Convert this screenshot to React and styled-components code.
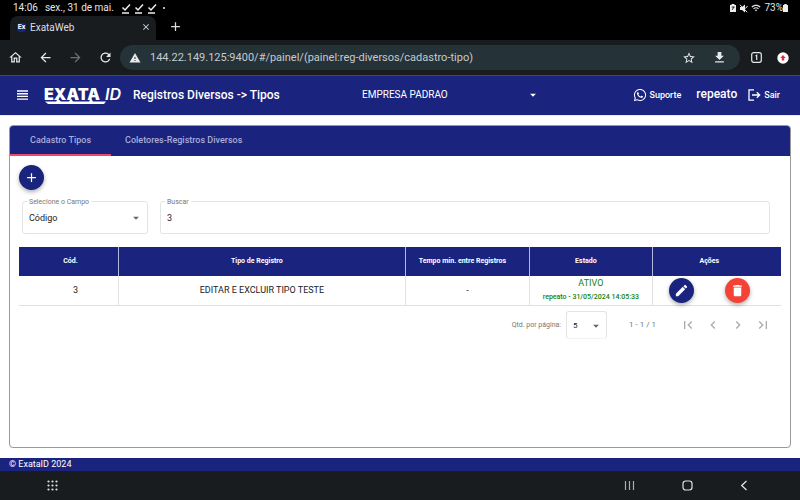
import React from "react";
import styled, { createGlobalStyle } from "styled-components";
import {
  MdAdd, MdArrowBack, MdArrowDropDown, MdArrowForward, MdChevronLeft, MdChevronRight,
  MdClose, MdDelete, MdDownload, MdEdit, MdFirstPage, MdLastPage, MdRefresh,
  MdStarBorder, MdWarning, MdWifi, MdOutlineHome,
} from "react-icons/md";
import { FaWhatsapp } from "react-icons/fa";

const navy = "#1a237e";
const dark = "#191c1e";

const Global = createGlobalStyle`
  * { box-sizing: border-box; }
  body { margin: 0; background: #fff; font-family: Roboto, sans-serif; color: #222; }
  button, input, select { font-family: inherit; color: inherit; }
  svg { display: block; flex: none; }
`;

const Page = styled.div`
  min-height: 100vh;
  display: flex;
  flex-direction: column;
`;

const Spacer = styled.div`
  flex: 1;
`;

const StatusBar = styled.div`
  height: 16px;
  padding: 0 12px 0 13px;
  display: flex;
  align-items: center;
  background: #000;
  color: #e4e4e4;
  font-size: 10px;
  line-height: 16px;
`;

const StatusText = styled.span`
  margin-right: 7px;
`;

const StatusIcons = styled.div`
  display: flex;
  align-items: center;
  gap: ${(p) => p.$gap || 3}px;
`;

const Dot = styled.span`
  width: 2px;
  height: 2px;
  margin-left: 3px;
  border-radius: 50%;
  background: #eee;
`;

const TabStrip = styled.div`
  height: 24px;
  padding-left: 10px;
  display: flex;
  align-items: stretch;
  gap: 12px;
  background: #000;
  color: #dcdfe1;
`;

const BrowserTab = styled.div`
  width: 146px;
  padding: 0 5px 2px 7px;
  display: flex;
  align-items: center;
  gap: 4px;
  border-radius: 8px 8px 0 0;
  background: ${dark};
  font-size: 10px;
`;

const Favicon = styled.span`
  width: 9px;
  height: 9px;
  border-radius: 3px;
  background: ${navy};
  color: #fff;
  font-size: 7px;
  font-weight: 700;
  line-height: 9px;
  text-align: center;
`;

const PlainButton = styled.button`
  padding: 0;
  border: 0;
  display: flex;
  align-items: center;
  justify-content: center;
  background: none;
  color: ${(p) => p.$color || "inherit"};
  cursor: pointer;
`;

const NewTabButton = styled(PlainButton)`
  padding-bottom: 3px;
`;

const Toolbar = styled.div`
  height: 36px;
  padding: 0 11px 0 8px;
  display: flex;
  align-items: center;
  gap: 15px;
  background: ${dark};
  border-bottom: 1px solid #484c50;
  color: #e6e8e9;
`;

const AddressBar = styled.div`
  flex: 1;
  height: 25px;
  margin: 0 -4px 0 -8px;
  padding: 0 13px 0 9px;
  display: flex;
  align-items: center;
  gap: 16px;
  border-radius: 13px;
  background: #253237;
`;

const Url = styled.input`
  flex: 1;
  min-width: 0;
  margin-left: -7px;
  padding: 0;
  border: 0;
  outline: 0;
  background: none;
  color: #c5cbce;
  font-size: 11px;
`;

const AppHeader = styled.header`
  height: 39px;
  padding: 0 20px 2px 16px;
  display: flex;
  align-items: center;
  background: ${navy};
  color: #fff;
`;

const Logo = styled.svg`
  margin: 0 8px 0 15px;
`;

const LogoText = styled.text`
  fill: #fff;
  font-family: Inter, sans-serif;
  font-size: ${(p) => p.$size}px;
  font-weight: ${(p) => p.$weight};
  font-style: ${(p) => (p.$italic ? "italic" : "normal")};
`;

const Title = styled.h1`
  flex: 0 0 229px;
  margin: 0;
  font-size: 12px;
  font-weight: 500;
`;

const SelectBox = styled.div`
  flex: ${(p) => p.$flex || "none"};
  display: grid;
  align-items: center;
  > * { grid-area: 1 / 1; }
  > svg { justify-self: end; pointer-events: none; color: ${(p) => p.$arrow || "#666"}; }
`;

const Select = styled.select`
  width: 100%;
  height: ${(p) => p.$height}px;
  padding: 0 18px 0 0;
  border: 0;
  outline: 0;
  appearance: none;
  background: none;
  font-size: ${(p) => p.$size}px;
`;

const HeaderLink = styled.a`
  display: flex;
  align-items: center;
  gap: 3px;
  color: #fff;
  font-size: 9px;
  font-weight: 500;
  text-decoration: none;
`;

const UserName = styled.span`
  margin: 0 11px 2px 15px;
  font-size: 12px;
  font-weight: 500;
`;

const Main = styled.main`
  flex: 1;
  padding: 9px 9px 10px;
  display: flex;
  border-top: 1px solid #e4edfb;
`;

const Panel = styled.section`
  flex: 1;
  min-width: 0;
  border: 1px solid #999;
  border-radius: 4px;
  overflow: hidden;
`;

const Tabs = styled.div`
  display: flex;
  height: 30px;
  background: ${navy};
`;

const Tab = styled.button`
  padding: 0 ${(p) => (p.$active ? 20 : 14)}px;
  border: 0;
  border-bottom: 2px solid ${(p) => (p.$active ? "#e84a70" : "transparent")};
  background: none;
  color: #a9addb;
  font-size: 9px;
  font-weight: 500;
  cursor: pointer;
`;

const Body = styled.div`
  padding: 9px 9px 8px;
`;

const RoundButton = styled.button`
  width: 25px;
  height: 25px;
  padding: 0;
  border: 0;
  border-radius: 50%;
  display: flex;
  align-items: center;
  justify-content: center;
  background: ${(p) => p.$color || navy};
  color: #fff;
  box-shadow: 0 2px 4px rgba(0, 0, 0, 0.32);
  cursor: pointer;
`;

const Filters = styled.div`
  margin: 11px 11px 13px 3px;
  display: flex;
  gap: 12px;
`;

const Field = styled.div`
  position: relative;
  flex: ${(p) => p.$flex};
  min-width: 0;
  height: 33px;
  padding: 0 4px 0 6px;
  border: 1px solid #e4e4e4;
  border-radius: 3px;
`;

const FieldLabel = styled.label`
  position: absolute;
  top: -4px;
  left: 4px;
  padding: 0 2px;
  background: #fff;
  color: #777;
  font-size: 7px;
  line-height: 8px;
`;

const TextInput = styled.input`
  width: 100%;
  height: 32px;
  padding: 0;
  border: 0;
  outline: 0;
  background: none;
  font-size: 9px;
`;

const Table = styled.table`
  width: 100%;
  table-layout: fixed;
  border-collapse: collapse;
`;

const HeadCell = styled.th`
  width: ${(p) => p.$width};
  height: 29px;
  padding: 0 ${(p) => p.$shift || 0}px 2px ${(p) => p.$indent || 0}px;
  border-right: ${(p) => (p.$last ? "0" : "1px solid #b4b8dc")};
  background: ${navy};
  color: #fff;
  font-size: 7px;
  font-weight: 700;
`;

const Cell = styled.td`
  height: 29px;
  padding: 0 0 0 ${(p) => (p.$indent || 0)}px;
  border-right: ${(p) => (p.$last ? "0" : "1px solid #e2e2e2")};
  border-bottom: 1px solid #e0e0e0;
  font-size: 9px;
  text-align: center;
`;

const State = styled.div`
  color: #128212;
  line-height: 14px;
`;

const StateDetail = styled(State)`
  font-size: 7px;
  font-weight: 500;
`;

const Actions = styled.div`
  display: flex;
  justify-content: center;
  gap: 31px;
  padding-right: 15px;
`;

const Pager = styled.div`
  margin-top: 5px;
  display: flex;
  justify-content: flex-end;
  align-items: center;
  padding-right: 10px;
  color: #777;
  font-size: 7px;
`;

const PageSize = styled.div`
  width: 41px;
  height: 28px;
  margin: 0 22px 0 5px;
  padding: 0 3px 0 6px;
  border: 1px solid #e4e4e4;
  border-bottom-color: #f3f3f3;
  border-radius: 3px;
  color: #222;
`;

const Range = styled.span`
  margin-right: 24px;
  font-size: 8px;
`;

const PageButtons = styled.div`
  display: flex;
  gap: 9px;
`;

const Footer = styled.footer`
  height: 13px;
  padding-left: 9px;
  background: ${navy};
  color: #fff;
  font-size: 9px;
  line-height: 12px;
`;

const SystemBar = styled.nav`
  height: 29px;
  padding: 0 52px 1px 47px;
  display: flex;
  align-items: center;
  gap: 47px;
  background: ${dark};
  color: #dfe2e3;
`;

const CheckMark = () => (
  <svg width="10" height="11" viewBox="0 0 10 11" fill="none" stroke="#eee" strokeWidth="1.5">
    <path d="M1.5 4.5 4 7 9 1.5M1 10h7" />
  </svg>
);

const MenuIcon = () => (
  <svg width="13" height="12" viewBox="0 0 13 12" stroke="#fff" strokeWidth="1.4">
    <path d="M1 2h11M1 4.7h11M1 7.4h11M1 10.1h11" />
  </svg>
);

const ExitIcon = () => (
  <svg width="13" height="12" viewBox="0 0 13 12" fill="none" stroke="#fff" strokeWidth="1.3">
    <path d="M6 .8H1v10.4h5M4 6h7.5M8.8 3.2 11.7 6 8.8 8.8" />
  </svg>
);

const CountIcon = () => (
  <svg width="11" height="11" viewBox="0 0 11 11" fill="none" stroke="#e6e8e9" strokeWidth="1.2">
    <rect x=".7" y=".7" width="9.6" height="9.6" rx="2" />
    <path d="M4.5 4 5.7 3.3V8" />
  </svg>
);

const UpdateIcon = () => (
  <svg width="12" height="12" viewBox="0 0 12 12">
    <circle cx="6" cy="6" r="5.7" fill="#fff" />
    <path d="M6 3 8.7 6H7.2v2.6H4.8V6H3.3z" fill="#d9303a" />
  </svg>
);

const AppsIcon = () => (
  <svg width="11" height="11" viewBox="0 0 11 11" fill="currentColor">
    {[1.5, 5.5, 9.5].flatMap((y) => [1.5, 5.5, 9.5].map((x) => <circle key={`${x}-${y}`} cx={x} cy={y} r="1.1" />))}
  </svg>
);

const RecentsIcon = () => (
  <svg width="11" height="11" viewBox="0 0 11 11" stroke="#a9adae" strokeWidth="1.2">
    <path d="M1.5 1v9M5.5 1v9M9.5 1v9" />
  </svg>
);

const HomeKeyIcon = () => (
  <svg width="11" height="11" viewBox="0 0 11 11" fill="none" stroke="currentColor" strokeWidth="1.2">
    <rect x="1" y="1" width="9" height="9" rx="2.7" />
  </svg>
);

const BackKeyIcon = () => (
  <svg width="8" height="11" viewBox="0 0 8 11" fill="none" stroke="currentColor" strokeWidth="1.3">
    <path d="M6.5 1 1.7 5.5l4.8 4.5" />
  </svg>
);

const BatterySaverIcon = () => (
  <svg width="6" height="8" viewBox="0 0 6 8">
    <path d="M0 1h1.5V0h3v1H6v7H0z" fill="#eee" />
    <path d="M1.7 3h2.8M4 3 2.2 5.8" stroke="#222" fill="none" />
  </svg>
);

const MuteIcon = () => (
  <svg width="9" height="9" viewBox="0 0 9 9">
    <path d="M1 3h2l3-2.6v8.2L3 6H1z" fill="#eee" />
    <path d="M1 .8 8.2 8.2M6.5 4.5 8.5 2" stroke="#eee" strokeWidth="1" />
  </svg>
);

const BatteryIcon = () => (
  <svg width="5" height="8" viewBox="0 0 5 8">
    <path d="M0 1h1.3V0h2.4v1H5v7H0z" fill="#eee" />
  </svg>
);

const columns = [
  { name: "Cód.", width: "13.05%", indent: 4 },
  { name: "Tipo de Registro", width: "37.65%", shift: 10 },
  { name: "Tempo mín. entre Registros", width: "16.3%", shift: 10 },
  { name: "Estado", width: "16.1%", shift: 10 },
  { name: "Ações", width: "16.9%", shift: 15 },
];

export default function App() {
  return (
    <Page>
      <Global />
      <StatusBar>
        <StatusText>14:06</StatusText>
        <StatusText>sex., 31 de mai.</StatusText>
        <StatusIcons>
          <CheckMark /><CheckMark /><CheckMark />
          <Dot />
        </StatusIcons>
        <Spacer />
        <StatusIcons $gap={3}>
          <BatterySaverIcon />
          <MuteIcon />
          <MdWifi size={10} />
          <span>73%</span>
        </StatusIcons>
        <BatteryIcon />
      </StatusBar>
      <TabStrip>
        <BrowserTab>
          <Favicon>Ex</Favicon>
          <span>ExataWeb</span>
          <Spacer />
          <PlainButton aria-label="Fechar aba"><MdClose size={10} /></PlainButton>
        </BrowserTab>
        <NewTabButton aria-label="Nova aba"><MdAdd size={15} /></NewTabButton>
      </TabStrip>
      <Toolbar>
        <PlainButton aria-label="Início"><MdOutlineHome size={15} /></PlainButton>
        <PlainButton aria-label="Voltar"><MdArrowBack size={15} /></PlainButton>
        <PlainButton aria-label="Avançar" $color="#6b7073"><MdArrowForward size={15} /></PlainButton>
        <PlainButton aria-label="Recarregar"><MdRefresh size={15} /></PlainButton>
        <AddressBar>
          <MdWarning size={12} />
          <Url aria-label="Endereço" defaultValue="144.22.149.125:9400/#/painel/(painel:reg-diversos/cadastro-tipo)" />
          <PlainButton aria-label="Favorito"><MdStarBorder size={14} /></PlainButton>
          <PlainButton aria-label="Baixar"><MdDownload size={15} /></PlainButton>
        </AddressBar>
        <PlainButton aria-label="Abas"><CountIcon /></PlainButton>
        <PlainButton aria-label="Atualizar"><UpdateIcon /></PlainButton>
      </Toolbar>

      <AppHeader>
        <PlainButton aria-label="Menu"><MenuIcon /></PlainButton>
        <Logo width="81" height="26" viewBox="0 0 81 26" role="img" aria-label="EXATA ID">
          <LogoText x="0" y="18" $size={16} $weight={900}>EXATA</LogoText>
          <LogoText x="61" y="18" $size={16} $weight={600} $italic>ID</LogoText>
          <path d="M1 19.5h11l2-2.5 3 2.5h8l2-3 2 3h16l2-3 2 3h13l-2 2.5H4z" fill="#fff" />
        </Logo>
        <Title>Registros Diversos -&gt; Tipos</Title>
        <SelectBox $flex="0 1 178px" $arrow="#fff">
          <Select aria-label="Empresa" $height={24} $size={10}><option>EMPRESA PADRAO</option></Select>
          <MdArrowDropDown size={14} />
        </SelectBox>
        <Spacer />
        <HeaderLink href="#suporte"><FaWhatsapp size={14} />Suporte</HeaderLink>
        <UserName>repeato</UserName>
        <HeaderLink href="#sair"><ExitIcon />Sair</HeaderLink>
      </AppHeader>

      <Main>
        <Panel>
          <Tabs role="tablist">
            <Tab role="tab" aria-selected="true" $active>Cadastro Tipos</Tab>
            <Tab role="tab" aria-selected="false">Coletores-Registros Diversos</Tab>
          </Tabs>
          <Body>
            <RoundButton aria-label="Adicionar"><MdAdd size={15} /></RoundButton>
            <Filters>
              <Field $flex="0 0 126px">
                <FieldLabel htmlFor="campo">Selecione o Campo</FieldLabel>
                <SelectBox>
                  <Select id="campo" $height={31} $size={9}><option>Código</option></Select>
                  <MdArrowDropDown size={14} />
                </SelectBox>
              </Field>
              <Field $flex="1">
                <FieldLabel htmlFor="buscar">Buscar</FieldLabel>
                <TextInput id="buscar" defaultValue="3" />
              </Field>
            </Filters>
            <Table>
              <thead>
                <tr>
                  {columns.map((c, i) => (
                    <HeadCell key={c.name} $width={c.width} $shift={c.shift} $indent={c.indent} $last={i === 4}>{c.name}</HeadCell>
                  ))}
                </tr>
              </thead>
              <tbody>
                <tr>
                  <Cell $indent={14}>3</Cell>
                  <Cell>EDITAR E EXCLUIR TIPO TESTE</Cell>
                  <Cell>-</Cell>
                  <Cell>
                    <State>ATIVO</State>
                    <StateDetail>repeato - 31/05/2024 14:05:33</StateDetail>
                  </Cell>
                  <Cell $last>
                    <Actions>
                      <RoundButton aria-label="Editar"><MdEdit size={15} /></RoundButton>
                      <RoundButton aria-label="Excluir" $color="#f44336"><MdDelete size={15} /></RoundButton>
                    </Actions>
                  </Cell>
                </tr>
              </tbody>
            </Table>
            <Pager>
              <label htmlFor="qtd">Qtd. por página:</label>
              <PageSize>
                <SelectBox>
                  <Select id="qtd" $height={28} $size={8}><option>5</option></Select>
                  <MdArrowDropDown size={14} />
                </SelectBox>
              </PageSize>
              <Range>1 - 1 / 1</Range>
              <PageButtons>
                <PlainButton aria-label="Primeira página" $color="#aaa"><MdFirstPage size={16} /></PlainButton>
                <PlainButton aria-label="Página anterior" $color="#aaa"><MdChevronLeft size={16} /></PlainButton>
                <PlainButton aria-label="Próxima página" $color="#aaa"><MdChevronRight size={16} /></PlainButton>
                <PlainButton aria-label="Última página" $color="#aaa"><MdLastPage size={16} /></PlainButton>
              </PageButtons>
            </Pager>
          </Body>
        </Panel>
      </Main>

      <Footer>© ExataID 2024</Footer>
      <SystemBar>
        <PlainButton aria-label="Aplicativos"><AppsIcon /></PlainButton>
        <Spacer />
        <PlainButton aria-label="Recentes"><RecentsIcon /></PlainButton>
        <PlainButton aria-label="Tela inicial"><HomeKeyIcon /></PlainButton>
        <PlainButton aria-label="Voltar"><BackKeyIcon /></PlainButton>
      </SystemBar>
    </Page>
  );
}
